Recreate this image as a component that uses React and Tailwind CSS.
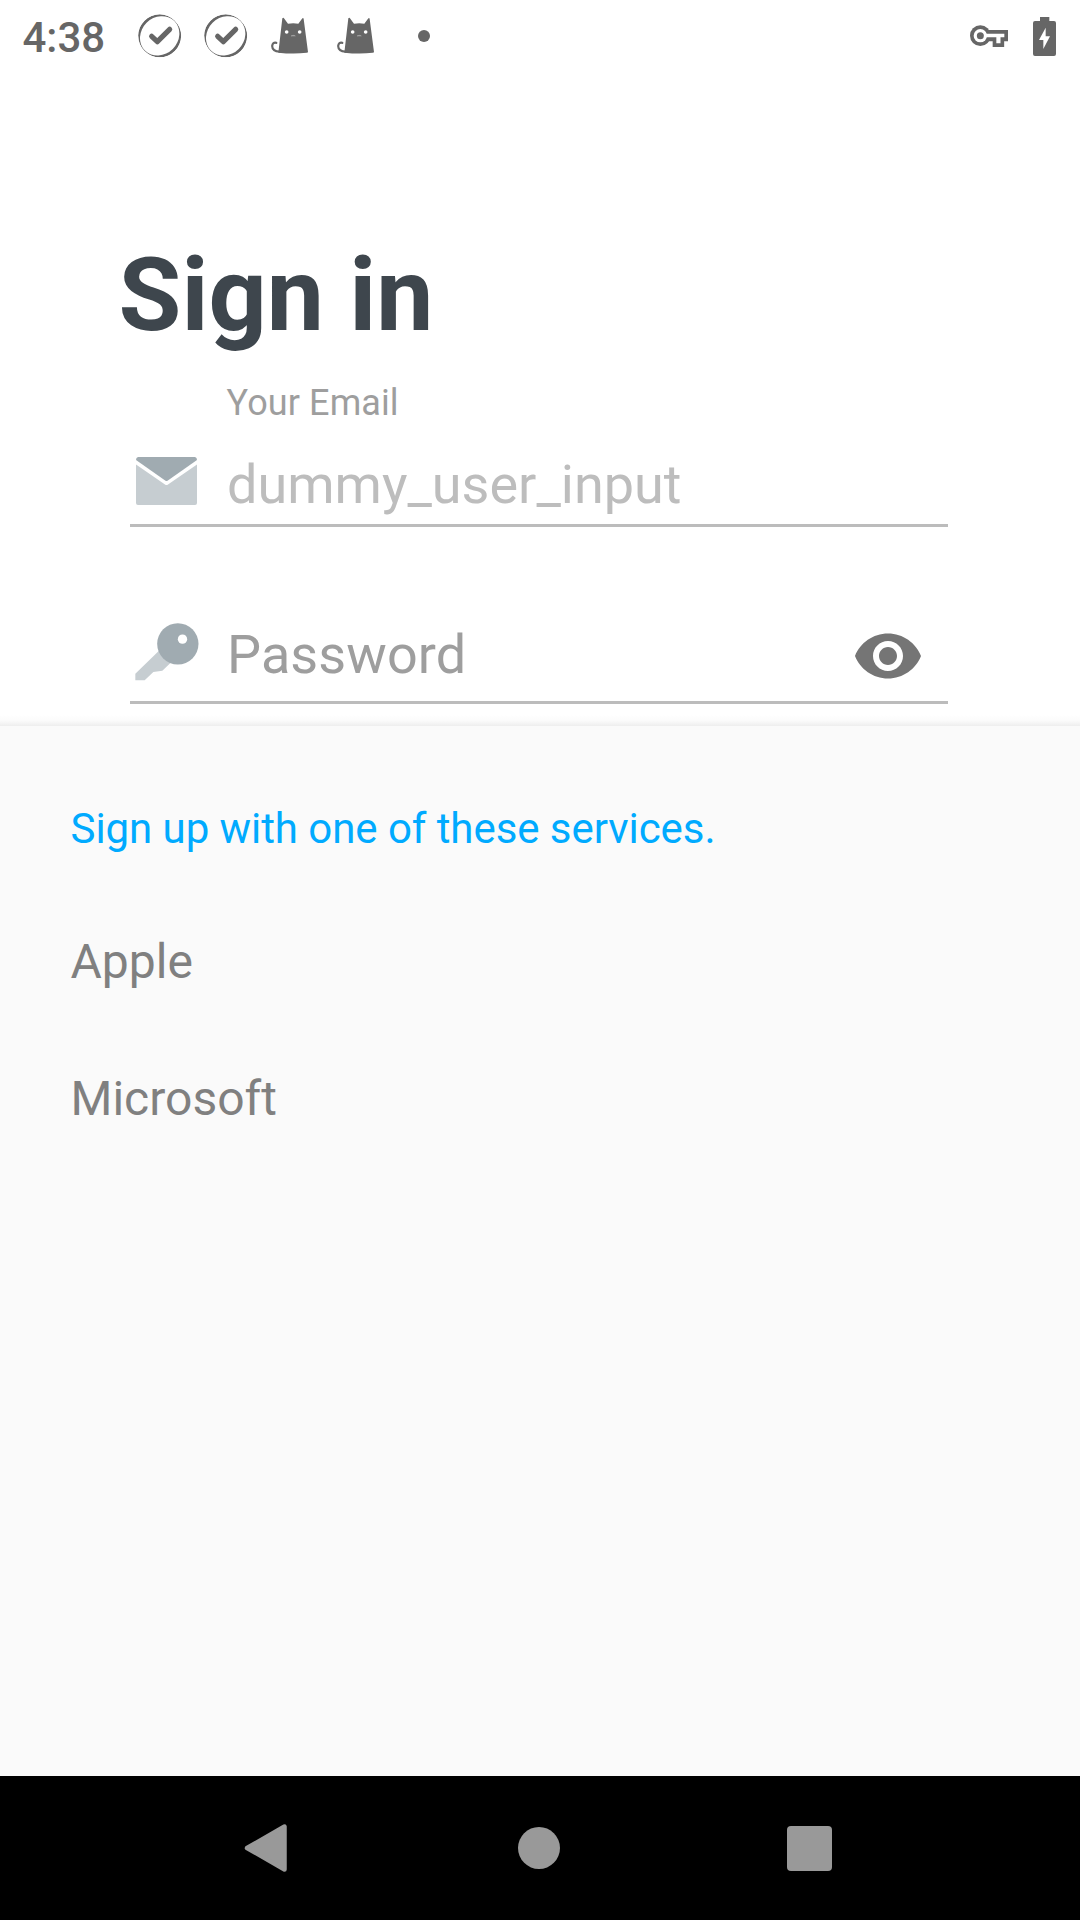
const CheckIcon = () => (
  <svg className="h-11 w-11 shrink-0" viewBox="-65 -65.5 132 132">
    <mask id="ring">
      <circle r="64.5" fill="white" />
      <ellipse rx="62.5" ry="55.5" transform="rotate(-45)" fill="black" />
    </mask>
    <circle r="64.5" fill="#666" mask="url(#ring)" />
    <path d="M-24 1.5 L-7 17.5 L30 -19.5" fill="none" stroke="#666" strokeWidth="15.5" strokeLinecap="round" strokeLinejoin="round" />
  </svg>
);

const CatIcon = () => (
  <svg className="h-[38px] w-[38px] shrink-0" viewBox="45 51 114 114">
    <path d="M82 55 Q85 51 88 56 L99 71 Q115 68 130 71 L141 56 Q145 51 146 57 L159 156 Q159 158 155 158.500 Q115 163 70 158 Z" fill="#666" />
    <path d="M64 128.500 Q53 126 51.500 138 Q52 154 74 155" fill="none" stroke="#666" strokeWidth="6.500" strokeLinecap="round" />
    <circle cx="95" cy="96" r="5.500" fill="white" />
    <circle cx="134" cy="96" r="5.500" fill="white" />
    <path d="M108 108 Q111 106 115 106 Q119 106 121 108 Z" fill="#aaa" stroke="#aaa" strokeWidth="1.500" />
  </svg>
);

const VpnKeyIcon = () => (
  <svg className="h-[22px] w-[38px]" viewBox="91.5 77.5 114 66">
    <circle cx="122.500" cy="109.500" r="31" fill="#666" />
    <path d="M140 92.500 H205.500 V126 H194 V143.500 H159.500 V126 H140 Z" fill="#666" />
    <circle cx="122.500" cy="109.500" r="20" fill="white" />
    <path d="M136 103.500 H194.500 V114.500 H183 V132.500 H170.500 V114.500 H136 Z" fill="white" />
    <circle cx="122.500" cy="109.500" r="10.500" fill="#666" />
  </svg>
);

const BatteryIcon = () => (
  <svg className="h-[39px] w-[23px]" viewBox="279 48 69 117">
    <path d="M300 48 H328 V60 H342 Q348 60 348 66 V159 Q348 165 342 165 H285 Q279 165 279 159 V66 Q279 60 285 60 H300 Z" fill="#666" />
    <path d="M317 80 L297 117 H310 V144 L330 106 H317 Z" fill="white" />
  </svg>
);

const MailIcon = () => (
  <svg className="h-12 w-[61px] shrink-0" viewBox="0 0 61 48">
    <path d="M2 0 H59 Q61 0.500 61 3 L31.500 23.800 Q30.500 24.300 29.500 23.800 L0 3 Q0 0.500 2 0 Z" fill="#a0abb1" />
    <path d="M0 7.500 L29 27.500 Q30.500 28.500 32 27.500 L61 7.500 V46 Q61 48 59 48 H2 Q0 48 0 46 Z" fill="#c6cdd1" />
  </svg>
);

const KeyIcon = () => (
  <svg className="h-[58px] w-16 shrink-0" viewBox="46 68 192 174">
    <path d="M47 220 L118 151 L153 187 L128 211 L101 215 L75 240 H47 Z" fill="#c6cdd1" />
    <circle cx="174.500" cy="130.500" r="62" fill="#a0abb1" />
    <circle cx="188.500" cy="116.500" r="14" fill="white" />
  </svg>
);

const EyeIcon = () => (
  <svg className="h-[72px] w-[72px]" viewBox="0 0 24 24">
    <path fill="#757575" d="M12 4.500C7 4.500 2.730 7.610 1 12c1.730 4.390 6 7.500 11 7.500s9.270-3.110 11-7.500c-1.730-4.390-6-7.500-11-7.500zM12 17c-2.760 0-5-2.240-5-5s2.240-5 5-5 5 2.240 5 5-2.240 5-5 5zm0-8c-1.660 0-3 1.340-3 3s1.340 3 3 3 3-1.340 3-3-1.340-3-3-3z" />
  </svg>
);

function StatusBar() {
  return (
    <header className="flex h-[72px] items-center justify-between pl-[22px] pr-6">
      <div className="flex items-center">
        <span className="w-[116px] pl-[0.5px] pt-[3px] text-[42px] font-medium leading-[49px] text-[#666]">4:38</span>
        <div className="flex gap-[22px]">
          <CheckIcon />
          <CheckIcon />
        </div>
        <div className="ml-[22px] flex gap-7">
          <CatIcon />
          <CatIcon />
        </div>
        <span className="ml-11 h-3 w-3 rounded-full bg-[#666]" />
      </div>
      <div className="flex items-center gap-[25px]">
        <VpnKeyIcon />
        <BatteryIcon />
      </div>
    </header>
  );
}

function SignInForm() {
  return (
    <main className="h-[654px] bg-white pt-[163px]">
      <h1 className="pl-[118.6px] text-[102px] font-bold leading-[120px] text-[#3e464d]">Sign in</h1>
      <div className="ml-[130px] w-[818px] pt-[27px]">
        <label className="block pl-[96.6px] text-[36px] leading-[42px] tracking-[0.1px] text-[#9e9e9e]">Your Email</label>
        <div className="mt-[29px] flex h-[74px] items-start border-b-3 border-[#bcbcbc] pl-1.5">
          <div className="w-[91px] pt-1">
            <MailIcon />
          </div>
          <span className="text-[54px] leading-[63px] text-[#bdbdbd]">dummy_user_input</span>
        </div>
        <div className="mt-[93px] flex h-[84px] items-start border-b-3 border-[#bcbcbc] pl-[5px]">
          <div className="w-[92px] pt-[3px]">
            <KeyIcon />
          </div>
          <span className="flex-1 pt-[3px] text-[54px] leading-[63px] tracking-[0.1px] text-[#9e9e9e]">Password</span>
          <div className="mr-6">
            <EyeIcon />
          </div>
        </div>
      </div>
      <div className="mt-[11px] h-[11px] bg-linear-to-b from-white via-[#fbfbfb] to-[#eeeeee]" />
    </main>
  );
}

function ServiceSheet() {
  return (
    <section className="flex flex-1 flex-col gap-20 bg-[#fafafa] pl-[70.5px] pt-[78px]">
      <h2 className="text-[42px] leading-[49px] tracking-[-0.06px] text-[#00aaff]">Sign up with one of these services.</h2>
      <div className="text-[48px] leading-[57px] text-[#808080]">Apple</div>
      <div className="text-[48px] leading-[57px] text-[#808080]">Microsoft</div>
    </section>
  );
}

function NavBar() {
  return (
    <nav className="flex h-36 items-center bg-black pl-[244px]">
      <svg className="h-12 w-[43px]" viewBox="0 0 43 48">
        <path d="M3 24 L40.500 2.500 V45.500 Z" fill="#999" stroke="#999" strokeWidth="4.500" strokeLinejoin="round" />
      </svg>
      <div className="ml-[231px] h-[42px] w-[42px] rounded-full bg-[#999]" />
      <div className="ml-[227px] h-[45px] w-[45px] rounded-[4px] bg-[#999]" />
    </nav>
  );
}

export default function App() {
  return (
    <div className="flex h-[1920px] w-[1080px] flex-col overflow-hidden bg-white font-['Roboto',sans-serif]">
      <StatusBar />
      <SignInForm />
      <ServiceSheet />
      <NavBar />
    </div>
  );
}
